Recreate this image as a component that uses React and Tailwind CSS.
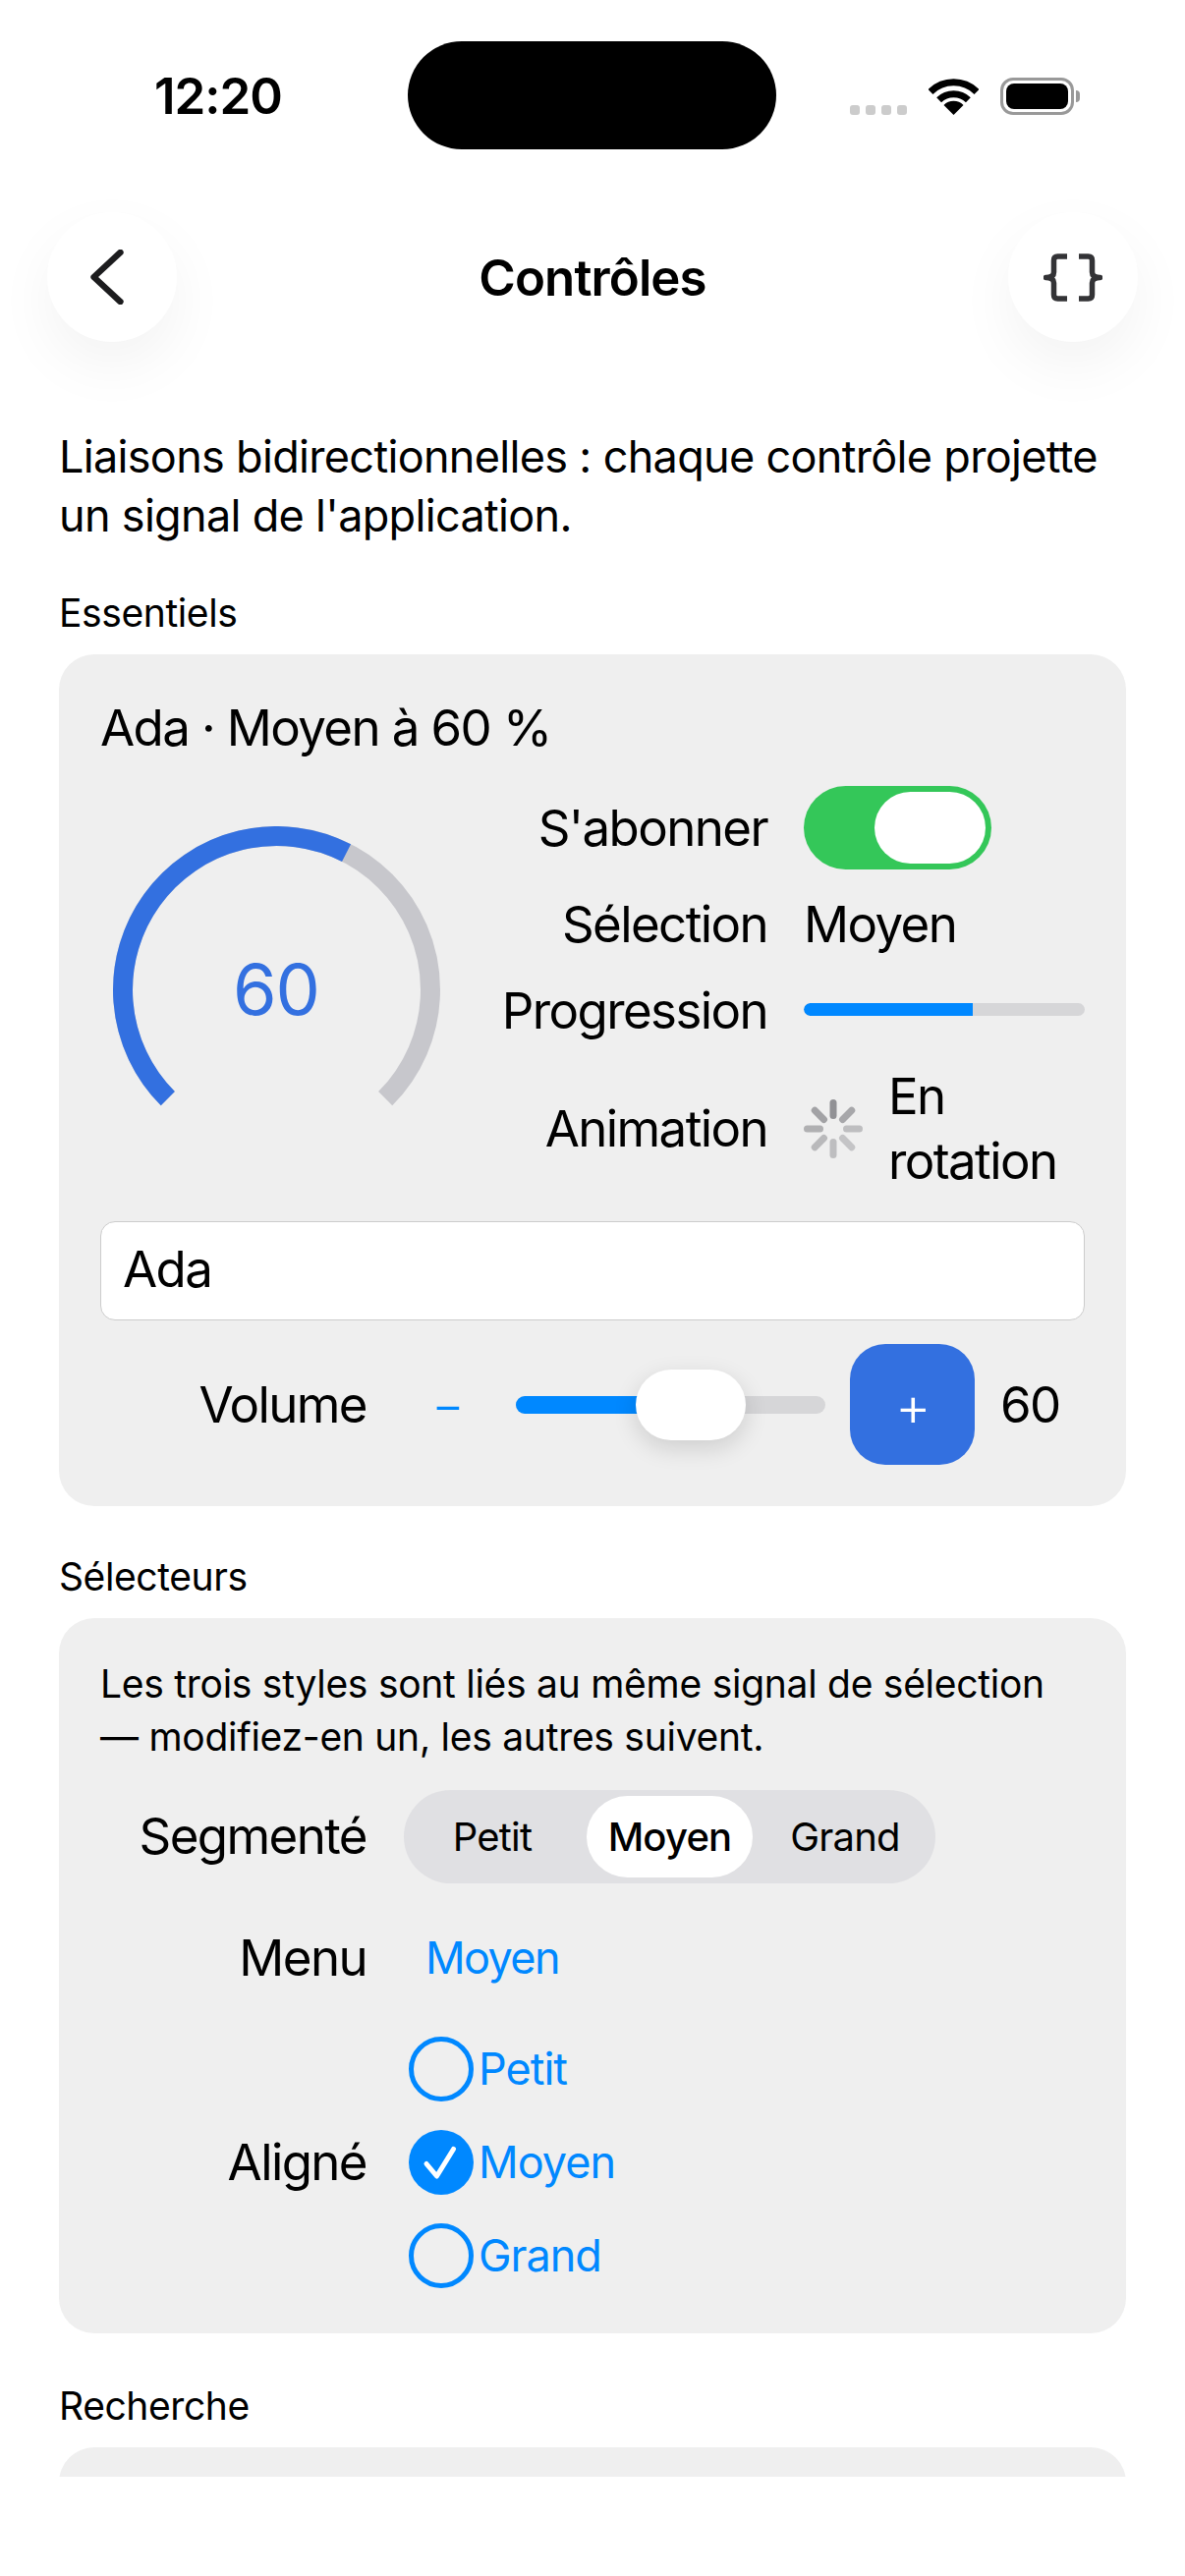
const spinnerOpacities = [0.52, 0.4, 0.27, 0.24, 0.27, 0.3, 0.35, 0.43];

const WifiIcon = () => (
  <svg width="51" height="37" viewBox="0 0 51 37" fill="none">
    <path d="M2 13.5 A33.5 33.5 0 0 1 49 13.5" stroke="black" strokeWidth="7" />
    <path d="M10.6 21.8 A21.5 21.5 0 0 1 40.4 21.8" stroke="black" strokeWidth="7" />
    <path d="M25.5 37 L15.5 27 A14 14 0 0 1 35.5 27 Z" fill="black" />
  </svg>
);

const Braces = () => (
  <svg width="60" height="49" viewBox="0 0 60 49" fill="none" stroke="#333336" strokeWidth="5.5" strokeLinejoin="round">
    <path d="M24 3 H14.5 Q10.5 3 10.5 7 V19 Q10.5 24.5 2.5 24.5 Q10.5 24.5 10.5 30 V42 Q10.5 46 14.5 46 H24" />
    <path d="M36 3 H45.5 Q49.5 3 49.5 7 V19 Q49.5 24.5 57.5 24.5 Q49.5 24.5 49.5 30 V42 Q49.5 46 45.5 46 H36" />
  </svg>
);

const Gauge = () => (
  <div className="relative w-[333px] h-[333px]">
    <svg width="333" height="333" viewBox="0 0 333 333" fill="none">
      <path d="M55.84 277.16 A156.5 156.5 0 1 1 277.16 277.16" stroke="#c7c7cc" strokeWidth="20" />
      <path d="M55.84 277.16 A156.5 156.5 0 0 1 237.55 27.06" stroke="#3370e0" strokeWidth="20" />
    </svg>
    <div className="absolute inset-0 pb-[2px] flex items-center justify-center text-[72px] tracking-[-1px] text-[#3370e0]">60</div>
  </div>
);

const Spinner = () => (
  <svg width="60" height="60" viewBox="0 0 60 60" className="shrink-0">
    {spinnerOpacities.map((o, i) => (
      <rect
        key={i}
        x="26.5"
        y="0"
        width="7"
        height="20"
        rx="3.5"
        fill="#3c3c43"
        opacity={o}
        transform={`rotate(${i * 45} 30 30)`}
      />
    ))}
  </svg>
);

const Radio = ({ label, checked }) => (
  <div className="flex items-center h-[66px] pl-[5px] text-[45px] tracking-[-1px] text-[#0088ff]">
    {checked ? (
      <span className="w-[66px] h-[66px] rounded-full bg-[#0088ff]">
        <svg width="66" height="66" viewBox="0 0 66 66" fill="none" stroke="white" strokeWidth="5" strokeLinecap="round" strokeLinejoin="round">
          <path d="M18 34.5 L28.5 47 L45.5 19.5" />
        </svg>
      </span>
    ) : (
      <span className="w-[66px] h-[66px] rounded-full border-[5px] border-[#0088ff]" />
    )}
    <span className="ml-[5px]">{label}</span>
  </div>
);

const SectionLabel = ({ children }) => (
  <div className="h-[54px] leading-[54px] text-[39px] mb-[15px] tracking-[-0.4px]">{children}</div>
);

export default function App() {
  return (
    <div className="w-[1206px] h-[2622px] bg-white text-black overflow-hidden flex flex-col [font-family:Inter,sans-serif] tracking-[-1.6px]">
      {/* Barre d'état */}
      <div className="h-[216px] shrink-0 flex items-start">
        <div className="w-[415px] h-[196px] flex items-center justify-center pl-[29px] text-[51px] font-semibold tracking-[-1px]">12:20</div>
        <div className="mt-[42px] w-[375px] h-[110px] rounded-[55px] bg-black" />
        <div className="ml-[75px] mt-[79px] flex items-end">
          <div className="flex gap-[6px]">
            <span className="w-[10px] h-[10px] rounded-[3px] bg-[#cccccc]" />
            <span className="w-[10px] h-[10px] rounded-[3px] bg-[#cccccc]" />
            <span className="w-[10px] h-[10px] rounded-[3px] bg-[#cccccc]" />
            <span className="w-[10px] h-[10px] rounded-[3px] bg-[#cccccc]" />
          </div>
          <div className="ml-[22px]"><WifiIcon /></div>
          <div className="ml-[22px] flex items-center">
            <div className="w-[75px] h-[38px] rounded-[13px] border-[3px] border-[#999999] p-[3px]">
              <div className="w-full h-full rounded-[8px] bg-black" />
            </div>
            <span className="w-[4px] h-[12px] ml-[2px] rounded-r-full bg-[#999999]" />
          </div>
        </div>
      </div>

      {/* Navigation */}
      <div className="h-[132px] shrink-0 px-[48px] flex items-center justify-between">
        <button className="w-[132px] h-[132px] rounded-full bg-white flex items-center justify-center pr-[11px] shadow-[0_24px_60px_rgba(0,0,0,0.05)]">
          <svg width="36" height="56" viewBox="0 0 36 58" fill="none" stroke="#1c1c1e" strokeWidth="6.5" strokeLinecap="round" strokeLinejoin="round">
            <path d="M32 3 L4 29 L32 55" />
          </svg>
        </button>
        <div className="text-[51px] font-semibold pt-[2px] tracking-[-0.9px]">Contrôles</div>
        <button className="w-[132px] h-[132px] rounded-full bg-white flex items-center justify-center shadow-[0_24px_60px_rgba(0,0,0,0.05)]">
          <Braces />
        </button>
      </div>

      {/* Contenu */}
      <div className="mt-[87px] h-[2086px] overflow-hidden px-[60px]">
        <p className="text-[45px] leading-[60px] mb-[42px] tracking-[-0.68px]">
          Liaisons bidirectionnelles : chaque contrôle projette un signal de l'application.
        </p>

        <SectionLabel>Essentiels</SectionLabel>
        <div className="bg-[#efefef] rounded-[36px] p-[42px] mb-[45px]">
          <div className="text-[51px] leading-[66px] mb-[26px]">Ada · Moyen à 60 %</div>
          <div className="flex items-center">
            <div className="w-[358px] flex justify-center shrink-0"><Gauge /></div>
            <div className="flex-1 grid grid-cols-[1fr_286px] gap-x-[37px] gap-y-[24px] items-center text-[51px]">
              <div className="text-right pt-[2px]">S'abonner</div>
              <div className="w-[191px] h-[85px] rounded-full bg-[#34c759] flex items-center justify-end pr-[6px]">
                <span className="w-[113px] h-[73px] rounded-full bg-white" />
              </div>
              <div className="text-right leading-[64px] h-[66px]">Sélection</div>
              <div className="leading-[64px] h-[66px]">Moyen</div>
              <div className="text-right leading-[60px]">Progression</div>
              <div className="h-[13px] mb-[3px] rounded-full bg-[#d6d6d8] overflow-hidden">
                <div className="h-full bg-[#0088ff] rounded-l-full" style={{ width: '60%' }} />
              </div>
              <div className="text-right">Animation</div>
              <div className="flex items-center gap-[26px]">
                <Spinner />
                <div className="leading-[66px]">En<br />rotation</div>
              </div>
            </div>
          </div>

          <div className="mt-[28px] h-[101px] rounded-[15px] bg-white border border-[#cccccc] flex items-center pl-[22px] pb-[2px] text-[51px]">Ada</div>

          <div className="mt-[24px] flex items-center h-[123px] text-[51px]">
            <div className="w-[271px] text-right pt-[2px]">Volume</div>
            <div className="ml-[70px] w-[24px] flex justify-center text-[#0088ff] text-[51px] font-light leading-none">−</div>
            <div className="ml-[58px] w-[315px] relative h-[18px] rounded-full bg-[#d6d6d8]">
              <div className="h-full w-[150px] rounded-l-full bg-[#0088ff]" />
              <div className="absolute left-[122px] top-[-27px] w-[112px] h-[72px] rounded-full bg-white shadow-[0_8px_24px_rgba(0,0,0,0.14)]" />
            </div>
            <button className="ml-[25px] w-[127px] h-[123px] rounded-[36px] bg-[#3370e0] text-white text-[56px] font-light leading-none pt-[3px] flex items-center justify-center">+</button>
            <div className="ml-[26px] pt-[2px]">60</div>
          </div>
        </div>

        <SectionLabel>Sélecteurs</SectionLabel>
        <div className="bg-[#efefef] rounded-[36px] pt-[40px] px-[42px] pb-[46px] mb-[47px]">
          <p className="text-[39px] leading-[54px] tracking-[-0.27px]">
            Les trois styles sont liés au même signal de sélection — modifiez-en un, les autres suivent.
          </p>

          <div className="mt-[27px] flex items-center">
            <div className="w-[271px] text-right text-[51px]">Segmenté</div>
            <div className="ml-[38px] w-[541px] h-[95px] rounded-full bg-[#e0e0e3] flex items-center text-[40px] tracking-[-0.8px] px-[6px]">
              <span className="w-[180px] pr-[12px] text-center">Petit</span>
              <span className="w-[169px] h-[83px] rounded-full bg-white font-medium flex items-center justify-center">Moyen</span>
              <span className="w-[180px] pl-[8px] text-center">Grand</span>
            </div>
          </div>

          <div className="mt-[44px] flex items-center h-[66px] pb-[2px]">
            <div className="w-[271px] text-right text-[51px]">Menu</div>
            <div className="ml-[60px] text-[45px] tracking-[-1.6px] text-[#0088ff]">Moyen</div>
          </div>

          <div className="mt-[46px] flex items-center">
            <div className="w-[271px] text-right text-[51px]">Aligné</div>
            <div className="ml-[38px] flex flex-col gap-[29px]">
              <Radio label="Petit" />
              <Radio label="Moyen" checked />
              <Radio label="Grand" />
            </div>
          </div>
        </div>

        <SectionLabel>Recherche</SectionLabel>
        <div className="bg-[#efefef] rounded-[36px] h-[200px]" />
      </div>
    </div>
  );
}
